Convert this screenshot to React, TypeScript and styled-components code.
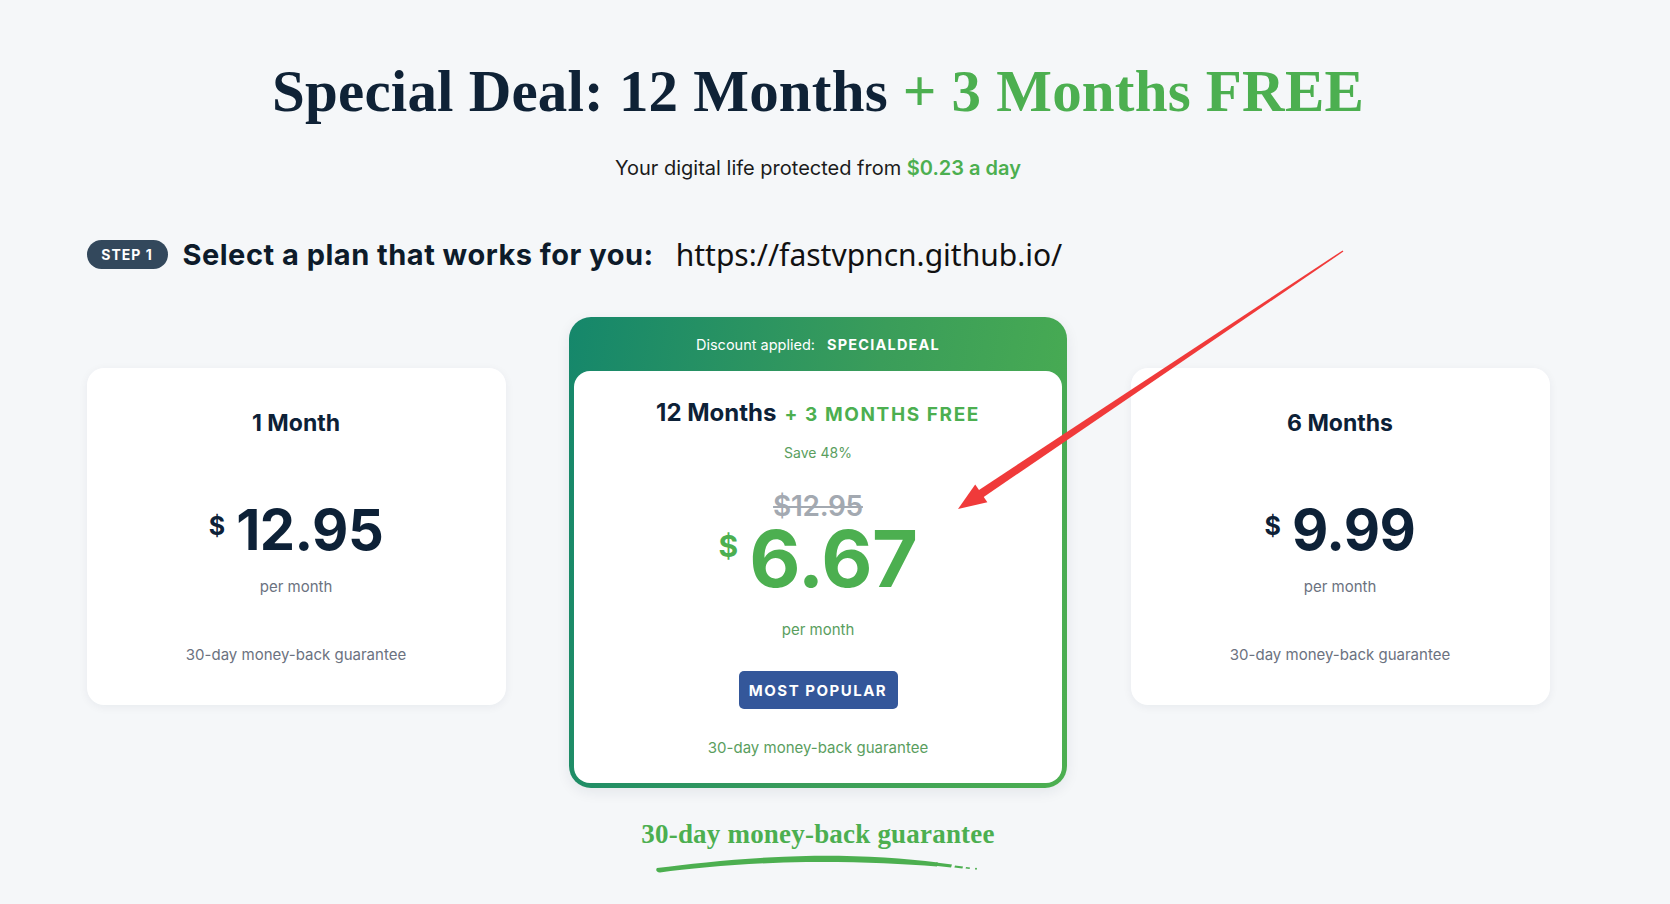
import React from "react";
import styled, { createGlobalStyle } from "styled-components";

const GlobalStyle = createGlobalStyle`
  html, body {
    margin: 0;
    padding: 0;
    background: #f5f7f9;
  }
  body {
    font-family: Inter, "Noto Sans", Arial, sans-serif;
    color: #0d2137;
  }
  * { box-sizing: border-box; }
`;

const Page = styled.div`
  position: relative;
  width: 1636px;
  height: 904px;
  overflow: hidden;
  display: flex;
  flex-direction: column;
  align-items: center;
`;

const Title = styled.h1`
  margin: 57px 0 0;
  font-family: "Liberation Serif", "Times New Roman", serif;
  font-weight: 700;
  font-size: 59px;
  line-height: 68px;
  color: #0f2236;
  letter-spacing: 0.2px;
  white-space: nowrap;
`;

const Green = styled.span`
  color: #4caf50;
`;

const Subtitle = styled.p`
  margin: 31px 0 0;
  font-size: 20px;
  line-height: 24px;
  color: #1b1b1b;
`;

const SubHighlight = styled.span`
  color: #4caf50;
  font-weight: 600;
`;

const Content = styled.div`
  width: 1463px;
  display: flex;
  flex-direction: column;
`;

const StepRow = styled.div`
  margin-top: 56px;
  display: flex;
  align-items: center;
  height: 36px;
`;

const StepBadge = styled.span`
  display: inline-flex;
  align-items: center;
  justify-content: center;
  width: 81px;
  height: 29px;
  border-radius: 15px;
  background: #33485c;
  color: #ffffff;
  font-size: 14px;
  font-weight: 700;
  letter-spacing: 1px;
`;

const StepHeading = styled.h2`
  margin: 0 0 0 15px;
  font-size: 29px;
  font-weight: 700;
  color: #0d1b2a;
  letter-spacing: 0.5px;
  white-space: nowrap;
`;

const Url = styled.span`
  margin-left: 22px;
  font-family: "Noto Sans", "Open Sans", sans-serif;
  font-size: 30px;
  font-weight: 400;
  color: #111111;
  white-space: nowrap;
`;

const Plans = styled.div`
  margin-top: 45px;
  display: flex;
  align-items: flex-start;
  justify-content: space-between;
`;

const SideCard = styled.div`
  margin-top: 51px;
  width: 419px;
  height: 337px;
  background: #ffffff;
  border-radius: 17px;
  box-shadow: 0 2px 10px rgba(20, 40, 60, 0.06);
  display: flex;
  flex-direction: column;
  align-items: center;
  padding: 41px 20px 0;
`;

const PlanName = styled.div`
  font-size: 23px;
  line-height: 28px;
  font-weight: 700;
  color: #0d2137;
`;

const PriceRow = styled.div<{ $mt: number; $gap: number }>`
  margin-top: ${(p) => p.$mt}px;
  display: flex;
  align-items: flex-start;
  gap: ${(p) => p.$gap}px;
`;

const Currency = styled.span<{ $size: number; $color: string; $mt: number }>`
  font-size: ${(p) => p.$size}px;
  line-height: 1;
  font-weight: 700;
  color: ${(p) => p.$color};
  margin-top: ${(p) => p.$mt}px;
`;

const Amount = styled.span<{ $size: number; $color: string }>`
  font-size: ${(p) => p.$size}px;
  line-height: 1;
  font-weight: 700;
  color: ${(p) => p.$color};
  letter-spacing: -0.5px;
`;

const SmallText = styled.div<{ $mt: number; $color: string }>`
  margin-top: ${(p) => p.$mt}px;
  font-size: 15px;
  line-height: 20px;
  color: ${(p) => p.$color};
`;

const FeaturedCard = styled.div`
  width: 498px;
  height: 471px;
  border-radius: 22px;
  background: linear-gradient(100deg, #15876b 0%, #3a9d5a 55%, #4caf50 100%);
  padding: 0 5px 5px;
  display: flex;
  flex-direction: column;
  box-shadow: 0 4px 14px rgba(20, 40, 60, 0.08);
`;

const DiscountBar = styled.div`
  height: 54px;
  display: flex;
  align-items: center;
  justify-content: center;
  gap: 12px;
  color: #ffffff;
  font-size: 14.5px;
`;

const Code = styled.span`
  font-weight: 700;
  letter-spacing: 1.2px;
`;

const FeaturedInner = styled.div`
  flex: 1;
  background: #ffffff;
  border-radius: 16px;
  display: flex;
  flex-direction: column;
  align-items: center;
  padding-top: 27px;
`;

const FeaturedName = styled.div`
  font-size: 24px;
  line-height: 30px;
  font-weight: 700;
  color: #0d2137;
  white-space: nowrap;
`;

const FreeTag = styled.span`
  margin-left: 8px;
  font-size: 19px;
  font-weight: 700;
  letter-spacing: 1.6px;
  color: #4caf50;
`;

const Save = styled.div`
  margin-top: 14px;
  font-size: 14px;
  line-height: 18px;
  color: #5a9e5e;
`;

const OldPrice = styled.div`
  margin-top: 31px;
  font-size: 28px;
  line-height: 26px;
  font-weight: 600;
  color: #a3a9b1;
  text-decoration: line-through;
  text-decoration-thickness: 2px;
  letter-spacing: -0.3px;
`;

const Popular = styled.div`
  margin-top: 31px;
  width: 159px;
  height: 38px;
  border-radius: 5px;
  background: #34579a;
  color: #ffffff;
  font-size: 15px;
  font-weight: 700;
  letter-spacing: 1.5px;
  display: flex;
  align-items: center;
  justify-content: center;
`;

const Guarantee = styled.div`
  margin-top: 31px;
  display: flex;
  flex-direction: column;
  align-items: center;
`;

const GuaranteeText = styled.div`
  font-family: "Liberation Serif", "Times New Roman", serif;
  font-size: 27px;
  line-height: 30px;
  font-weight: 700;
  color: #4caf50;
  letter-spacing: 0.2px;
`;

const Brush = styled.svg`
  display: block;
  margin-top: 5px;
`;

const ArrowLayer = styled.svg`
  position: absolute;
  left: 0;
  top: 0;
  pointer-events: none;
`;

type Side = { name: string; price: string };

const SidePlan: React.FC<Side> = ({ name, price }) => (
  <SideCard>
    <PlanName>{name}</PlanName>
    <PriceRow $mt={65} $gap={11}>
      <Currency $size={25} $color="#0d2137" $mt={12}>$</Currency>
      <Amount $size={56} $color="#0d2137">{price}</Amount>
    </PriceRow>
    <SmallText $mt={19} $color="#6b7280">per month</SmallText>
    <SmallText $mt={48} $color="#6b7280">30-day money-back guarantee</SmallText>
  </SideCard>
);

export default function App() {
  return (
    <>
      <GlobalStyle />
      <Page>
        <Title>
          Special Deal: 12 Months <Green>+ 3 Months FREE</Green>
        </Title>
        <Subtitle>
          Your digital life protected from <SubHighlight>$0.23 a day</SubHighlight>
        </Subtitle>
        <Content>
          <StepRow>
            <StepBadge>STEP 1</StepBadge>
            <StepHeading>Select a plan that works for you:</StepHeading>
            <Url>https://fastvpncn.github.io/</Url>
          </StepRow>
          <Plans>
            <SidePlan name="1 Month" price="12.95" />
            <FeaturedCard>
              <DiscountBar>
                <span>Discount applied:</span>
                <Code>SPECIALDEAL</Code>
              </DiscountBar>
              <FeaturedInner>
                <FeaturedName>
                  12 Months<FreeTag>+ 3 MONTHS FREE</FreeTag>
                </FeaturedName>
                <Save>Save 48%</Save>
                <OldPrice>$12.95</OldPrice>
                <PriceRow $mt={0} $gap={11}>
                  <Currency $size={30} $color="#4caf50" $mt={12}>$</Currency>
                  <Amount $size={79} $color="#4caf50">6.67</Amount>
                </PriceRow>
                <SmallText $mt={22} $color="#5a9e5e">per month</SmallText>
                <Popular>MOST POPULAR</Popular>
                <SmallText $mt={29} $color="#5a9e5e">30-day money-back guarantee</SmallText>
              </FeaturedInner>
            </FeaturedCard>
            <SidePlan name="6 Months" price="9.99" />
          </Plans>
        </Content>
        <Guarantee>
          <GuaranteeText>30-day money-back guarantee</GuaranteeText>
          <Brush width="324" height="22" viewBox="0 0 324 22">
            <path
              d="M1 14 C 40 9, 95 3, 150 2 C 200 1.2, 245 4, 282 8.5 L 281 12.5 C 245 9.5, 200 7.5, 150 8 C 95 8.8, 40 13.5, 4 18.5 C 0 18, -0.5 15.5, 1 14 Z"
              fill="#4caf50"
            />
            <path d="M280 8.6 L 296 10.6 L 295 13.4 L 279 11.8 Z" fill="#4caf50" />
            <path d="M299 11.4 L 307 12.6 L 306.4 14.6 L 298.4 13.6 Z" fill="#4caf50" />
            <path d="M310 13 L 314 13.6 L 313.6 15 L 309.6 14.6 Z" fill="#4caf50" />
            <circle cx="320" cy="14.8" r="1" fill="#4caf50" />
          </Brush>
        </Guarantee>
        <ArrowLayer width="1636" height="904" viewBox="0 0 1636 904">
          <polygon
            points="1343.4,251.6 1342.6,250.4 975.6,492.2 980.4,499.2"
            fill="#f03a3a"
          />
          <polygon points="958,509 975.2,484.6 987.4,502.2" fill="#f03a3a" />
        </ArrowLayer>
      </Page>
    </>
  );
}
